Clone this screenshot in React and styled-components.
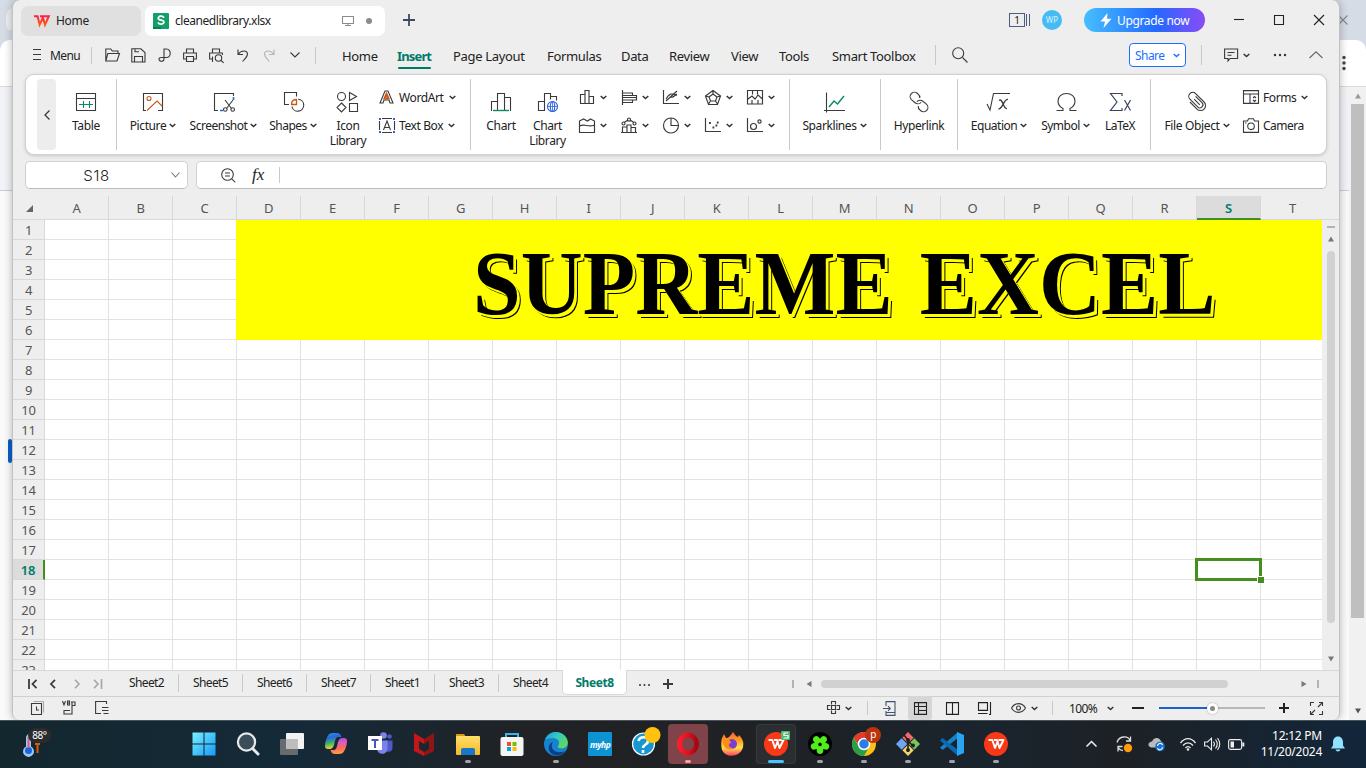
import React from "react";
import styled, { createGlobalStyle, css } from "styled-components";

const Global = createGlobalStyle`
  * { box-sizing: border-box; }
  body { margin: 0; overflow: hidden; }
  #root { width: 1366px; height: 768px; }
`;

const GREEN = "#007a68";

const Screen = styled.div`
  position: relative;
  width: 1366px;
  height: 768px;
  overflow: hidden;
  background: #fafafa;
  font-family: "Noto Sans", "Open Sans", sans-serif;
  font-size: 12px;
  letter-spacing: -0.4px;
  color: #222;
  white-space: nowrap;
  display: flex;
  flex-direction: column;
`;

/* ---------- icon helper ---------- */
const Svg = styled.svg`
  display: block;
  flex: none;
  overflow: visible;
  fill: none;
  stroke: ${(p) => p.$c || "#3a3a3a"};
  stroke-width: ${(p) => p.$sw || 1.1};
  margin-left: ${(p) => p.$ml || 0}px;
`;
const Icon = ({ w = 24, h = 24, c, sw, ml, children }) => (
  <Svg width={w} height={h} viewBox={`0 0 ${w} ${h}`} $c={c} $sw={sw} $ml={ml}>
    {children}
  </Svg>
);
const Caret = ({ ml, c = "#333" }) => (
  <Icon w={7} h={5} ml={ml} c={c} sw={1.5}><path d="M.7 1 L3.5 3.6 L6.3 1" /></Icon>
);

/* ---------- browser window behind ---------- */
const Backdrop = styled.div`
  position: absolute;
  inset: 0 0 48px 0;
  display: flex;
  flex-direction: column;
`;
const BackTabs = styled.div`
  height: 40px;
  background: #d6dce6;
  display: flex;
  justify-content: space-between;
`;
const BackTab = styled.div`
  margin: 7px 0 7px 6px;
  width: 60px;
  border-radius: 10px;
  background: #eceef2;
`;
const BackClose = styled.div`padding: 15px 18px 0 0;`;
const BackToolbar = styled.div`
  height: 47px;
  background: #fff;
  border-radius: 10px 10px 0 0;
  border-bottom: 1px solid #d9dbd6;
  box-shadow: 0 -10px 0 0 #d6dce6;
  display: flex;
  justify-content: flex-end;
  padding: 15px 20px 0 0;
`;
const BackBody = styled.div`
  flex: 1;
  display: flex;
  justify-content: space-between;
`;
const BackPage = styled.div`
  width: 1349px;
  display: flex;
  flex-direction: column;
  background: #fafafa;
`;
const BackHero = styled.div`
  height: 104px;
  background: #f1f3f6;
  border-bottom: 1px solid #c3cfdc;
`;
const BackMark = styled.div`
  width: 4px;
  height: 24px;
  margin: 248px 0 0 8px;
  border-radius: 2px;
  background: #0b5fcb;
`;
const BackScroll = styled.div`
  width: 17px;
  background: #f1f1f1;
  display: flex;
  flex-direction: column;
  align-items: center;
  padding-top: 6px;
`;
const BackThumb = styled.div`
  width: 13px;
  height: 514px;
  margin: 5px 0 90px;
  background: #bfbfbf;
`;

/* ---------- application window ---------- */
const Window = styled.div`
  position: absolute;
  left: 12px;
  top: 0;
  width: 1328px;
  height: 720px;
  border: 1px solid #c2c2c2;
  border-width: 0 1px 0 1px;
  border-radius: 8px 8px 7px 7px;
  background: #eeeeee;
  box-shadow: 0 0 9px rgba(0, 0, 0, 0.28);
  overflow: hidden;
  display: flex;
  flex-direction: column;
`;
const TitleBar = styled.div`
  height: 40px;
  flex: none;
  display: flex;
  align-items: center;
  padding-left: 8px;
`;
const Tab = styled.div`
  width: ${(p) => p.$w}px;
  height: 30px;
  margin: 1px 4px 0 0;
  padding-left: ${(p) => p.$pl}px;
  border-radius: 7px;
  background: ${(p) => (p.$active ? "#fff" : "#e0e0e0")};
  display: flex;
  align-items: center;
`;
const TabText = styled.span`
  width: ${(p) => p.$w}px;
  margin-left: ${(p) => p.$ml}px;
  letter-spacing: ${(p) => p.$ls ?? -0.4}px;
`;
const Dot = styled.i`
  width: 6px;
  height: 6px;
  margin-left: 12px;
  border-radius: 50%;
  background: #8c8c8c;
`;
const Count = styled.div`
  width: 16px;
  height: 14px;
  margin-left: 594px;
  border: 1px solid #4c5d80;
  font-size: 10px;
  line-height: 12px;
  text-align: center;
`;
const CountBars = styled.div`
  width: 4px;
  height: 12px;
  border: solid #4c5d80;
  border-width: 0 1px;
  margin-left: 1px;
`;
const Avatar = styled.div`
  width: 20px;
  height: 20px;
  margin-left: 12px;
  border-radius: 50%;
  background: #45bbf3;
  color: #d9f2ff;
  font-size: 8px;
  letter-spacing: 0;
  line-height: 19px;
  text-align: center;
`;
const Upgrade = styled.div`
  width: 121px;
  height: 24px;
  margin-left: 22px;
  padding-left: 16px;
  border-radius: 12px;
  background: linear-gradient(90deg, #45bfff, #2468ff 60%, #8a4bf8);
  color: #fff;
  display: flex;
  align-items: center;
  gap: 5px;
  letter-spacing: -0.35px;
`;

const MenuBar = styled.div`
  height: 35px;
  flex: none;
  display: flex;
  align-items: center;
  padding: 0 0 5px 19px;
`;
const VLine = styled.i`
  width: 1px;
  height: ${(p) => p.$h || 20}px;
  margin-left: ${(p) => p.$ml || 0}px;
  margin-right: ${(p) => p.$mr || 0}px;
  background: #c9c9c9;
  flex: none;
`;
const MenuTabs = styled.div`
  display: flex;
  margin-left: 26px;
  padding-top: 7px;
  height: 32px;
  font-size: 13px;
  letter-spacing: -0.33px;
`;
const MenuTab = styled.div`
  width: ${(p) => p.$w}px;
  height: 22px;
  line-height: 20px;
  ${(p) => p.$active && css`
    color: ${GREEN};
    font-weight: 700;
    letter-spacing: -0.85px;
    &::after {
      content: "";
      display: block;
      width: 33px;
      height: 2px;
      margin: 1px 0 0 1px;
      border-radius: 1px;
      background: ${GREEN};
    }
  `}
`;
const Share = styled.div`
  width: 57px;
  height: 24px;
  margin-left: 161px;
  border: 1px solid #1a6fff;
  border-radius: 4px;
  background: #fff;
  color: #1a6fff;
  display: flex;
  align-items: center;
  padding-left: 5px;
  letter-spacing: -0.55px;
`;

const Ribbon = styled.div`
  height: 79px;
  flex: none;
  margin: 0 13px;
  border-radius: 8px;
  background: #fff;
  box-shadow: 0 0 0 1px #d2d2d2, 0 1px 4px rgba(0, 0, 0, 0.25);
  display: flex;
  padding: 4px 0 4px 11px;
`;
const RibbonScroll = styled.div`
  width: 19px;
  border-radius: 4px;
  background: #ededed;
  display: flex;
  align-items: center;
  justify-content: center;
  margin-right: 1px;
`;
const RibbonCell = styled.div`
  width: ${(p) => p.$w}px;
  padding-top: 11px;
  flex: none;
  display: flex;
  flex-direction: column;
  align-items: center;
`;
const CellLabel = styled.div`
  display: flex;
  align-items: center;
  justify-content: center;
  gap: 3px;
  margin-top: 4px;
  line-height: 15px;
  text-align: center;
  white-space: pre;
  letter-spacing: ${(p) => p.$ls ?? -0.4}px;
`;
const RibbonStack = styled.div`
  width: ${(p) => p.$w}px;
  padding: 4px 0 0 ${(p) => p.$pl || 0}px;
  flex: none;
`;
const StackRow = styled.div`
  height: 28px;
  display: flex;
  align-items: center;
`;
const StackText = styled.span`
  width: ${(p) => p.$w}px;
  margin-left: 4px;
  letter-spacing: ${(p) => p.$ls ?? -0.4}px;
`;
const MiniCell = styled.div`
  width: 42px;
  display: flex;
  align-items: center;
  gap: 5px;
`;

const FormulaRow = styled.div`
  height: 42px;
  flex: none;
  display: flex;
  gap: 8px;
  padding: 7px 12px 8px;
`;
const Field = styled.div`
  ${(p) => (p.$w ? `width: ${p.$w}px;` : "flex: 1;")}
  height: 28px;
  border: 1px solid #d0d0d0;
  border-bottom-color: #bcbcbc;
  border-radius: 5px;
  background: #fff;
  display: flex;
  align-items: center;
`;
const NameText = styled.span`
  width: 145px;
  padding-right: 4px;
  text-align: center;
  font-family: Inter, "Open Sans", sans-serif;
  font-weight: 300;
  font-size: 15px;
  letter-spacing: 0.6px;
`;
const Fx = styled.span`
  margin-left: 16px;
  width: 28px;
  font: italic 17px "Liberation Serif", serif;
  letter-spacing: 0;
`;

/* ---------- sheet ---------- */
const SheetArea = styled.div`
  height: 474px;
  flex: none;
  display: flex;
  overflow: hidden;
  color: #555;
  font-size: 13px;
  letter-spacing: -0.3px;
`;
const RowHeads = styled.div`width: 32px; flex: none;`;
const Corner = styled.div`
  height: 24px;
  border-bottom: 1px solid #d8d8d8;
  padding: 9px 0 0 13px;
`;
const RowHead = styled.div`
  height: 20px;
  line-height: 21px;
  text-align: center;
  border-bottom: 1px solid #d8d8d8;
  border-right: 1px solid #d8d8d8;
  ${(p) => p.$on && css`
    color: ${GREEN};
    font-weight: 600;
    background: #dcdcdc;
    border-right: 2px solid #3f8f1f;
  `}
`;
const Sheet = styled.div`
  width: 1277px;
  flex: none;
  overflow: hidden;
  position: relative;
`;
const ColHeads = styled.div`display: flex;`;
const ColHead = styled.div`
  width: 64px;
  flex: none;
  height: 24px;
  line-height: 25px;
  text-align: center;
  border-bottom: 1px solid #d8d8d8;
  border-right: 1px solid ${(p) => (p.$last ? "transparent" : "#d8d8d8")};
  ${(p) => p.$on && css`
    color: ${GREEN};
    font-weight: 600;
    background: #dcdcdc;
    border-bottom: 2px solid #3f8f1f;
  `}
`;
const Cells = styled.div`
  height: 450px;
  background-color: #fff;
  background-image:
    linear-gradient(90deg, transparent 63px, #e2e2e2 63px),
    linear-gradient(transparent 19px, #e2e2e2 19px);
  background-size: 64px 20px;
  padding-left: 191px;
`;
const Banner = styled.div`
  height: 120px;
  padding-left: 237px;
  background: #ffff00;
  color: #000;
  font: bold 92px/126px "Liberation Serif", serif;
  letter-spacing: 0;
  word-spacing: 6px;
  text-shadow: 1px 1px 0 #ff0, 2px 2px 0 #ff0, 3px 3px 0 #ff0, 4px 4px 0 #000;
`;
const BannerText = styled.span`
  display: inline-block;
  transform: scaleX(0.933);
  transform-origin: 0 50%;
`;
/* selection frame drawn over the cell grid */
const Selection = styled.div`
  position: absolute;
  left: 1150px;
  top: 362px;
  width: 67px;
  height: 23px;
  border: 3px solid #43901f;
  &::after {
    content: "";
    position: absolute;
    right: -5px;
    bottom: -5px;
    width: 6px;
    height: 6px;
    background: #43901f;
    border: solid #fff;
    border-width: 1px 0 0 1px;
  }
`;
const VScroll = styled.div`
  flex: 1;
  display: flex;
  flex-direction: column;
  align-items: center;
  margin-top: 23px;
  border-top: 1px solid #d8d8d8;
  padding-top: 6px;
`;
const Tick = styled.i`
  width: ${(p) => p.$w}px;
  height: ${(p) => p.$h}px;
  margin-left: ${(p) => p.$ml || 0}px;
  background: #b3b3b3;
  flex: none;
`;
const VThumb = styled.div`
  width: 8px;
  height: 372px;
  margin: 9px 0 33px;
  border-radius: 4px;
  background: #d1d1d1;
`;

const SheetBar = styled.div`
  height: 26px;
  flex: none;
  border-top: 1px solid #d8d8d8;
  display: flex;
  align-items: center;
  padding-left: 14px;
`;
const SheetTabs = styled.div`display: flex; margin-left: 12px; height: 25px;`;
const SheetTab = styled.div`
  width: 64px;
  height: 18px;
  margin-top: 3px;
  line-height: 17px;
  text-align: center;
  letter-spacing: -0.6px;
  border-right: 1px solid ${(p) => (p.$plain ? "transparent" : "#c9c9c9")};
  ${(p) => p.$active && css`
    height: 25px;
    width: 65px;
    margin: -1px 0 0 -1px;
    line-height: 26px;
    background: #fff;
    border: 1px solid #d8d8d8;
    border-top: 0;
    border-radius: 0 0 5px 5px;
    color: ${GREEN};
    font-weight: 700;
    letter-spacing: -0.45px;
  `}
`;
const HThumb = styled.div`
  width: 407px;
  height: 8px;
  margin: 0 73px 0 9px;
  border-radius: 4px;
  background: #d1d1d1;
`;
const StatusBar = styled.div`
  height: 24px;
  flex: none;
  border-top: 1px solid #d0d0d0;
  display: flex;
  align-items: center;
  padding: 0 0 1px 18px;
`;
const ViewButton = styled.div`
  width: 24px;
  height: 24px;
  margin-left: 12px;
  border-radius: 3px;
  background: #d6d6d6;
  display: flex;
  align-items: center;
  justify-content: center;
`;
const Zoom = styled.span`margin-left: 16px; width: 28px; letter-spacing: -0.6px;`;
const Slider = styled.div`
  width: 106px;
  height: 2px;
  margin-left: 15px;
  background: linear-gradient(90deg, #1c61c9 50%, #b8b8b8 50%);
  display: flex;
  align-items: center;
  justify-content: center;
`;
const Knob = styled.div`
  width: 11px;
  height: 11px;
  border-radius: 50%;
  border: 3px solid #fff;
  background: #888;
  box-shadow: 0 0 2px rgba(0, 0, 0, 0.35);
  flex: none;
`;

/* ---------- taskbar ---------- */
const Taskbar = styled.div`
  height: 48px;
  margin-top: auto;
  position: relative;
  border-top: 1px solid #46525a;
  background: linear-gradient(90deg, #13272f, #152a38 22%, #202226 38%, #1f2124 55%, #1a242d 72%, #1d2126 82%, #12263a);
  color: #fff;
  display: flex;
  align-items: center;
  padding-bottom: 1px;
`;
const Weather = styled.div`width: 182px; padding-left: 22px; display: flex;`;
const Temp = styled.div`
  width: 23px;
  height: 15px;
  margin: -4px 0 0 -12px;
  border-radius: 8px;
  background: #2c2c2c;
  font-size: 10px;
  line-height: 15px;
  text-align: center;
  z-index: 1;
`;
const TaskCell = styled.div`
  width: 44px;
  height: 46px;
  display: flex;
  align-items: center;
  justify-content: center;
`;
const TaskTile = styled.div`
  width: 40px;
  height: 40px;
  border-radius: 4px;
  background: ${(p) => p.$bg || "transparent"};
  box-shadow: ${(p) => (p.$ring ? "inset 0 0 0 1px #383b3e" : "none")};
  display: flex;
  flex-direction: column;
  align-items: center;
  padding-top: 8px;
`;
const Run = styled.i`
  width: ${(p) => p.$w}px;
  height: 3px;
  margin-top: 4px;
  border-radius: 2px;
  background: ${(p) => p.$c};
`;
const Clock = styled.div`
  width: 70px;
  margin-left: 8px;
  text-align: right;
  line-height: 16px;
  letter-spacing: -0.25px;
`;

/* ---------- ribbon data ---------- */
const G = "#0a8a6a", O = "#c8591c", B = "#2f62e0";
const big = {
  table: <Icon><path d="M2.500 3.500h19v17h-19zM2.500 8.500h19" /><path stroke={G} d="M5 14.500h14M9.500 11v7M15.500 11v7" /></Icon>,
  picture: <Icon><path d="M5 20.500H2.500v-17h19v17H17" /><circle cx="8" cy="8.500" r="2" stroke={O} /><path stroke={O} d="M6 20.500l10-9.500 5.500 5.500" /></Icon>,
  shot: <Icon><path d="M6 20.500H2.500v-17h19V6" /><path stroke={B} strokeWidth="1.600" d="M8 20.500h3M21.500 7v3" /><path d="M13 10l6.500 8.500M21 10l-6.500 8.500" /><circle cx="13.300" cy="19.500" r="1.800" /><circle cx="20.700" cy="19.500" r="1.800" /></Icon>,
  shapes: <Icon><path d="M8 14.500H3.500v-12h12V6.500" /><path stroke={O} strokeWidth="1.300" d="M10.500 14.500c0-3 2-5 5-5v5z" /><path d="M17.200 9.200a6 6 0 1 1-6.300 7.300" /></Icon>,
  icons: <Icon><circle cx="5.500" cy="6.500" r="4" /><path d="M13.500 2.500v8l7-4zM5.500 13l4.500 4.500-4.500 4.500-4.500-4.500zM13.500 13.500h8v8h-8z" /></Icon>,
  chart: <Icon><path d="M2.500 21V11.500h6V21M8.500 11.500v-8h7V21M15.500 7.500h6V21" /><path stroke={G} strokeWidth="1.400" d="M4 20.500h16" /></Icon>,
  chartLib: <Icon><path d="M2.500 20.500v-9h6v9zM8.500 11.500v-8h6v6M14.500 6.500h6v4" /><g stroke={B}><circle cx="16.500" cy="16.500" r="5" /><ellipse cx="16.500" cy="16.500" rx="2.200" ry="5" /><path d="M11.500 16.500h10M16.500 11.500v10" strokeWidth=".8" /></g></Icon>,
  spark: <Icon><path d="M3.500 2.500v20M1 20.500h21" /><path stroke={G} strokeWidth="1.400" d="M6 17l5-6 3.500 3L21 6" /></Icon>,
  link: <Icon><g transform="rotate(40 12 12)"><path d="M10 8.500A4.200 4.200 0 0 0 6 6.500H5a4.300 4.300 0 0 0 0 8.600h4.500a4.300 4.300 0 0 0 4.300-4.300" /><path d="M14 15.500a4.200 4.200 0 0 0 4 2h1a4.300 4.300 0 0 0 0-8.600h-4.500a4.300 4.300 0 0 0-4.300 4.300" /></g></Icon>,
  equation: <Icon><path d="M0 14l3 6 3.500-16.500H23" /><path strokeWidth="1.300" d="M12 10.500c4-3 4 9 8 8M21 9.500c-4-1-5.500 10-9.500 9.500" /></Icon>,
  symbol: <Icon><path d="M2.500 20.500H9v-2c-3-1.500-5-4-5-7.500 0-4.500 3.500-7.500 8.500-7.500S21 6.500 21 11c0 3.500-2 6-5 7.500v2h6.500" /></Icon>,
  latex: <Icon><g stroke="#38445e" strokeWidth="1.200"><path d="M14 6V3.500H2.500L9 12l-6.500 8.500H14V18M16.500 10l6 10.500M22.500 10l-6 10.500" /></g></Icon>,
  clip: <Icon><g transform="rotate(-45 12 12)"><path d="M15 7v9a3 3 0 0 1-6 0V5a4 4 0 0 1 8 0v12a5 5 0 0 1-10 0V7M12 8v8" /></g></Icon>,
};
const mini = [
  [<path d="M1.500 13.500v-9H6v9M6 13.500v-13h4v13M10 6.500h4.500v7M1 13.500h14" />, <path d="M1.500 0v15M1.500 3h10v2.500H2M1.500 5.500h14v4.500h-14M11.500 10v2.500h-10M2 7.500h13" />, <path d="M.5 0v13.500H16M3 11L14 1M3 9C8 0 11 6 14 5M8 7c2 1 4-2 6-3" />, <path d="M8 .5L15.500 6l-3 8.500h-9L.5 6zM8 4l4 3-1.500 4h-5L4 7zM8 0v4M.5 6L4 7M15.500 6L12 7M3.500 14l2-3M12.500 14l-2-3" />, <path d="M.5 .5h15v13.500H.5zM5.500 .5v4M10.500 .5v4M1 9l4-3 3 3 3-4 4.500 4M5 14v-4M11 14v-4" />],
  [<path d="M.5 3l4-2 4 2 3-2 4 2v11.500H.5zM.5 8c6-3 8 2 15-1" />, <path d="M1.500 14V9h4.500v5M6 14V7h4v7M10 9.500h4.500V14M0 14.500h16M3 4.500l4-2.500M9 2l4 2.500M1 5.500a1.500 1.500 0 1 0 3 0 1.500 1.500 0 1 0-3 0M6.500 1.500a1.500 1.500 0 1 0 3 0 1.500 1.500 0 1 0-3 0M12 5.500a1.500 1.500 0 1 0 3 0 1.500 1.500 0 1 0-3 0" />, <g><circle cx="8" cy="7.500" r="7.500" /><path d="M8 0v7.500h7.500" /></g>, <g><path d="M.5 0v13.500H16" /><path strokeWidth="1.800" d="M4 5h1.800M7.500 9.500h1.800M10.500 7.500h1.800M11.800 4.500h1.800" /></g>, <g><path d="M.5 0v13.500H16" /><circle cx="6.500" cy="8.500" r="3" /><circle cx="12.500" cy="3.500" r="1.600" /></g>],
];

const Item = ({ w, icon, label, caret, ls }) => (
  <RibbonCell $w={w}>
    {big[icon]}
    <CellLabel $ls={ls}>{label}{caret && <Caret />}</CellLabel>
  </RibbonCell>
);

/* ---------- taskbar icons ---------- */
const WpsW = () => (
  <path fill="none" stroke="#fff" strokeWidth="1.900" strokeLinejoin="round" d="M4.500 8h3.800l2.700 8 3-7.500M10 8h3l2.500 8L19.500 8h-5" />
);
const task = [
  { i: <g fill="url(#win)"><path d="M.5 .5h11v11H.5zM12.500 .5h11v11h-11zM.5 12.500h11v11H.5zM12.500 12.500h11v11h-11z" /></g> },
  { i: <g fill="#3b4d58" stroke="#e6eaee"><circle cx="10.500" cy="10" r="8.600" strokeWidth="2.200" /><path strokeWidth="3" strokeLinecap="round" d="M17 17l5 5" /></g> },
  { i: <g><rect x="6" y="1" width="18" height="16" rx="1" fill="#f2f2f2" /><rect x="0" y="7" width="18" height="16" rx="1" fill="#777" fillOpacity=".85" /><rect x="6" y="7" width="12" height="10" fill="#bdbdbd" /></g> },
  { i: <g><path fill="url(#cpA)" d="M1 14C1 9 3 5 4.500 3S8 1 13 1q3.500 0 4.500 4h-3c-2.500 0-3 2-4 6s-2 6-5.500 6-4-1-4-3z" /><path fill="url(#cpB)" d="M23 9c0 5-2 9-3.500 11S16 22 11 22q-3.500 0-4.500-4h3c2.500 0 3-2 4-6s2-6 5.500-6 4 1 4 3z" /></g> },
  { i: <g><circle cx="15.500" cy="3.500" r="3.300" fill="#7b83eb" /><circle cx="21.500" cy="4.500" r="2.300" fill="#5059c9" /><path fill="#5059c9" d="M17 8.500h7.500v7c0 4-3 5-6 4z" /><path fill="#7b83eb" d="M9 8.500h10.500v8c0 7-10.500 7-10.500 0z" /><rect x="0" y="4" width="14" height="14" fill="#fff" /><path fill="none" stroke="#4b53bc" strokeWidth="2" d="M3.500 8h7M7 8v8" /></g> },
  { i: <g><path fill="#c6161c" d="M2 1l10 6v5L7 9v8l5 3v4L2 19z" /><path fill="#8e1616" d="M22 1L12 7v5l5-3v8l-5 3v4l10-5z" /></g> },
  { run: 1, i: <g><path fill="#d99a12" d="M0 2h8l2 3H0z" /><rect y="4" width="24" height="19" rx="1" fill="url(#fold)" /><path fill="#1777c9" d="M5 23v-5q0-2 2-2h10q2 0 2 2v5z" /></g> },
  { i: <g><path fill="none" stroke="#38b7ee" strokeWidth="2" d="M6 6V2h12v4" /><rect x=".5" y="5" width="23" height="19" rx="2" fill="#f5f5f5" /><path fill="#f25022" d="M7 10h4v4H7z" /><path fill="#7fba00" d="M12.500 10h4v4h-4z" /><path fill="#00a4ef" d="M7 15h4v4H7z" /><path fill="#ffb900" d="M12.500 15h4v4h-4z" /></g> },
  { run: 1, i: <g><circle cx="12" cy="12" r="12" fill="#1583d0" /><path fill="url(#edgeG)" d="M1 8C4-1 14-2 20 3c5 5 5 11 0 13-3 1-7 0-6-2 3-4 0-8-5-8-4 0-7 1-8 2z" /><path fill="#0c3f86" d="M9 10c-4 6 2 13 12 9-5 7-14 5-16-1-1-4 1-7 4-8z" /></g> },
  { i: <g><rect width="24" height="24" rx="1" fill="#0d93d2" /><text x="2" y="15.500" fill="#fff" fontSize="8.500" fontStyle="italic" fontWeight="bold" letterSpacing="-.5">myhp</text></g> },
  { i: <g><circle cx="11.500" cy="12" r="11" fill="#1597d4" stroke="#fff" strokeWidth="1.200" /><path fill="none" stroke="#fff" strokeWidth="2.600" d="M6.500 9c1-5 9.500-5 9.500 0 0 4-5 3-5 7M11 18v3" /><circle cx="20.500" cy="3" r="8" fill="#ffc20e" /></g> },
  { tile: "#7f4449", run: 1, runC: "#ff9a9e", i: <g><ellipse cx="12" cy="12" rx="8.500" ry="9" fill="none" stroke="url(#opera)" strokeWidth="5" /></g> },
  { i: <g><path fill="url(#fx)" d="M2 6l2-4 2 4c3 0 4-2 7-6 2 2 2 4 5 5l1-2c4 4 5 8 4 12-2 10-17 12-21 3C1 14 1 9 2 6z" /><circle cx="12" cy="12" r="5" fill="#7a3fd0" /><path fill="#ff8a1c" d="M3 8c5-2 8 1 8 3-3 0-3 5 2 5-5 4-11-1-10-8z" /></g> },
  { tile: "#2b2e31", ring: 1, run: 16, runC: "#4cc2ff", i: <g><circle cx="12" cy="12" r="12" fill="#f93817" /><WpsW /><rect x="17" y="-1" width="9" height="9" rx="1" fill="#4db872" /><path fill="none" stroke="#fff" strokeWidth="1.200" d="M24 1h-4v2.500h4V6h-4.500" /></g> },
  { run: 1, i: <g><circle cx="12" cy="12" r="12" fill="#000" />{[0, 72, 144, 216, 288].map((a) => <ellipse key={a} cx="12" cy="7" rx="3.300" ry="4" fill="#4ff01a" transform={`rotate(${a + 36} 12 12.500)`} />)}</g> },
  { run: 1, i: <g><circle cx="12" cy="12" r="12" fill="#fbc116" /><path fill="#e33b2e" d="M1.600 6A12 12 0 0 1 22.400 6H12L8 15z" /><path fill="#27a04a" d="M1.600 6A12 12 0 0 0 12 24l5-9-9 1z" /><circle cx="12" cy="12" r="5.500" fill="#2a7de9" stroke="#fff" strokeWidth="1.500" /><circle cx="21" cy="3" r="8" fill="#b9330f" /><text x="18.200" y="6" fill="#fff" fontSize="10" letterSpacing="0">p</text></g> },
  { run: 1, i: <g><g transform="rotate(45 12 12)"><path fill="#f0696c" d="M3.500 3.500h8v8h-8z" /><path fill="#7cc35b" d="M12.500 3.500h8v8h-8z" /><path fill="#6ea8f5" d="M3.500 12.500h8v8h-8z" /><path fill="#f3d36b" d="M12.500 12.500h8v8h-8z" /></g><path fill="none" stroke="#222" strokeWidth="1.600" d="M8 3l4 5v12M12 9l5 5" /><circle cx="12" cy="8" r="2" fill="#222" /><circle cx="12" cy="18" r="2" fill="#222" /><circle cx="17" cy="13.500" r="2" fill="#222" /></g> },
  { run: 1, i: <g><path fill="#1780c8" d="M18 0L0 15.500l2.500 2.500L18 6z" /><path fill="#0a68b0" d="M18 24L0 8.500 2.500 6 18 18z" /><path fill="#2aa4f0" d="M17 0l7 3v18l-7 3z" /></g> },
  { run: 1, i: <g><circle cx="12" cy="12" r="12" fill="#f93817" /><WpsW /></g> },
];

const grad = (id, stops, x2 = 1, y2 = 1) => (
  <linearGradient id={id} x1="0" y1="0" x2={x2} y2={y2}>
    {stops.map((s, i) => <stop key={i} offset={i / (stops.length - 1)} stopColor={s} />)}
  </linearGradient>
);
const Defs = () => (
  <Svg width="0" height="0">
    <defs>
      {grad("win", ["#7df0fd", "#45c6fb", "#1899f5"])}
      {grad("cpA", ["#1aa0e8", "#2d62e0", "#38b46b", "#f5cf2a"], 0.2, 1)}
      {grad("cpB", ["#8c52e8", "#e35ac0", "#f86b5f", "#ff9a3d"], 0.1, 1)}
      {grad("fold", ["#ffdf6b", "#f7b824"], 0, 1)}
      {grad("edgeG", ["#1b9be0", "#35c8c3", "#5fd95a"], 1, 0.6)}
      {grad("opera", ["#ff1b2d", "#e0121f", "#a00a14"], 1, 0)}
      {grad("fx", ["#ff5a3c", "#ff9a1c", "#ffe14a", "#ff3d63"], 0, 1)}
      {grad("wps", ["#ff1f4b", "#ff5a0f"], 0, 1)}
    </defs>
  </Svg>
);

const Tri = ({ d = "up", ml, c = "#777", s = 6 }) => (
  <Icon w={s} h={s} ml={ml} c="none">
    <path fill={c} d={{ up: "M0 5.500L3 .5 6 5.500z", down: "M0 .5L3 5.500 6 .5z", left: "M5.500 0L.5 3l5 3z", right: "M.5 0L5.500 3l-5 3z" }[d]} />
  </Icon>
);

export default function App() {
  const cols = "ABCDEFGHIJKLMNOPQRST".split("");
  const rows = Array.from({ length: 23 }, (_, i) => i + 1);
  return (
    <Screen>
      <Global />
      <Defs />
      <Backdrop>
        <BackTabs>
          <BackTab />
          <BackClose><Icon w={10} h={10} c="#888"><path d="M.5 .5l9 9M9.500 .5l-9 9" /></Icon></BackClose>
        </BackTabs>
        <BackToolbar><Icon w={4} h={16} c="none"><g fill="#444"><circle cx="2" cy="2.500" r="1.700" /><circle cx="2" cy="8" r="1.700" /><circle cx="2" cy="13.500" r="1.700" /></g></Icon></BackToolbar>
        <BackBody>
          <BackPage><BackHero /><BackMark /></BackPage>
          <BackScroll><Tri c="#9a9a9a" /><BackThumb /><Tri d="down" c="#555" /></BackScroll>
        </BackBody>
      </Backdrop>

      <Window>
        <TitleBar>
          <Tab $w={120} $pl={13}>
            <Icon w={16} h={12} c="url(#wps)" sw={2}><path d="M0 1.200h3.600l2 8.600 3.600-7.800M6 1.200h2.500l2.500 8.600L14.800 1.200H9.500" /></Icon>
            <TabText $w={40} $ml={6} $ls={-0.3}>Home</TabText>
          </Tab>
          <Tab $w={240} $pl={8} $active>
            <Icon w={16} h={16} c="none"><rect width="16" height="16" rx="1" fill="#12a06a" /><path fill="#0b7d50" d="M0 14h8v2H0z" /><path stroke="#fff" strokeWidth="1.800" d="M11 4.800C9.500 2.300 5 2.800 5.300 5.400c.3 2.500 5.400 1.200 5.600 3.500.2 2.600-4.500 2.900-6 .5" /></Icon>
            <TabText $w={161} $ml={6} $ls={-0.45}>cleanedlibrary.xlsx</TabText>
            <Icon w={12} h={12} ml={6} c="#8c8c8c"><path d="M.5 1.500h11v7H.5zM6 8.500v2M3 10.500h6" /></Icon>
            <Dot />
          </Tab>
          <Icon w={12} h={12} ml={14} c="#3d4a63" sw={1.8}><path d="M6 0v12M0 6h12" /></Icon>
          <Count>1</Count><CountBars />
          <Avatar>WP</Avatar>
          <Upgrade>
            <Icon w={12} h={15} c="none"><path fill="#fff" d="M7.500 0L.5 8.500h4.500L3.500 15 11.500 5.800H7z" /></Icon>
            Upgrade now
          </Upgrade>
          <Icon w={10} h={10} ml={29} c="#222"><path d="M0 4.500h10" /></Icon>
          <Icon w={10} h={10} ml={30} c="#222"><path d="M.5 .5h9v9h-9z" /></Icon>
          <Icon w={10} h={10} ml={30} c="#222"><path d="M0 0l10 10M10 0L0 10" /></Icon>
        </TitleBar>

        <MenuBar>
          <Icon w={10} h={12} ml={0}><path d="M1 .5h8M1 5.500h8M1 10.500h8" /></Icon>
          <TabText $w={41} $ml={8} $ls={-0.6}>Menu</TabText>
          <VLine $h={17} />
          <Icon w={15} h={14} ml={13}><path d="M.8 13V1h5l1.500 2H13v2.500M.8 13l2-7.500H14.500L12 13z" /></Icon>
          <Icon w={15} h={15} ml={11}><path d="M3.500 14H.8V.8h9L14 4.500V14h-2.500M3.500 14V8.500h8V14zM4 .8v3h4" /></Icon>
          <Icon w={13} h={15} ml={12}><path d="M6 9.500h2.500c5 0 5-8.500 0-8.500H6v10c0 3-5 3-5 .3 0-1.300 1-1.800 2.500-1.800h2" /></Icon>
          <Icon w={14} h={15} ml={12}><path d="M3.500 5V1h7v4M3.500 11H.6V5h12.800v6h-2.900M3.500 8.500h7v5h-7z" /></Icon>
          <Icon w={16} h={15} ml={12}><path d="M3.500 5V1h7v4M4 11H.6V5h12.800v2M3.500 14V8.500" /><circle cx="9.500" cy="10" r="3.200" /><path d="M12 12.500l2.800 2.300" /></Icon>
          <Icon w={12} h={13} ml={12}><path d="M1 0.500v5h5M1.200 5.300C4 1 10.500 1 10.500 5c0 3-3 5-5 7.500" /></Icon>
          <Icon w={12} h={13} ml={14} c="#b5b5b5"><path d="M11 .5v5H6M10.800 5.300C8 1 1.500 1 1.500 5c0 3 3 5 5 7.500" /></Icon>
          <Icon w={10} h={6} ml={15}><path d="M.5 .5L5 5 9.500 .5" /></Icon>
          <VLine $h={17} $ml={15} />
          <MenuTabs>
            {[["Home", 55], ["Insert", 56], ["Page Layout", 94], ["Formulas", 74], ["Data", 48], ["Review", 62], ["View", 48], ["Tools", 53], ["Smart Toolbox", 103]].map(([t, w]) => (
              <MenuTab key={t} $w={w} $active={t === "Insert"}>{t}</MenuTab>
            ))}
          </MenuTabs>
          <VLine />
          <Icon w={16} h={16} ml={16}><circle cx="6.200" cy="6.200" r="5.500" /><path d="M10.500 10.500l5 5" /></Icon>
          <Share>Share<Caret ml={9} c="#1a6fff" /></Share>
          <VLine $ml={15} />
          <Icon w={15} h={14} ml={22}><path d="M.6 1h13v9.500H6l-2 2.500v-2.500H.6zM3.500 4.500h7M3.500 7.200h4" /></Icon>
          <Caret ml={4} />
          <Icon w={14} h={4} ml={23} c="none"><g fill="#333"><circle cx="2" cy="2" r="1.200" /><circle cx="7" cy="2" r="1.200" /><circle cx="12" cy="2" r="1.200" /></g></Icon>
          <Icon w={14} h={8} ml={22} c="#667"><path d="M.5 7L7 .8 13.500 7" /></Icon>
        </MenuBar>

        <Ribbon>
          <RibbonScroll><Icon w={6} h={10} sw={1.300}><path d="M5.500 .5L1 5l4.500 4.500" /></Icon></RibbonScroll>
          <Item w={58} icon="table" label="Table" ls={-0.3} />
          <VLine $h={71} $ml={1} />
          <Item w={72} icon="picture" label="Picture" caret />
          <Item w={69} icon="shot" label="Screenshot" caret ls={-0.5} />
          <Item w={70} icon="shapes" label="Shapes" caret ls={-0.5} />
          <Item w={40} icon="icons" label={"Icon\nLibrary"} />
          <RibbonStack $w={102} $pl={11}>
            <StackRow>
              <Icon w={16} h={14}><path d="M1 13L6 1h3l5 12h-3l-1-3H5l-1 3z" /><path stroke={O} strokeWidth="2" d="M5.500 8.500L7.500 4l2 4.500z" /></Icon>
              <StackText $w={50}>WordArt</StackText><Caret />
            </StackRow>
            <StackRow>
              <Icon w={16} h={15}><path d="M3 .5h10M3 14.500h10M.5 3v9M15.500 3v9M4.500 12L8 3l3.500 9M5.500 9.500h5" /><path stroke={B} strokeWidth="2" d="M0 1h2M14 1h2M0 14h2M14 14h2" /></Icon>
              <StackText $w={49}>Text Box</StackText><Caret />
            </StackRow>
          </RibbonStack>
          <VLine $h={71} $mr={2} />
          <Item w={56} icon="chart" label="Chart" ls={-0.3} />
          <Item w={37} icon="chartLib" label={"Chart\nLibrary"} />
          <RibbonStack $w={223} $pl={13}>
            {mini.map((r, i) => (
              <StackRow key={i}>
                {r.map((g, j) => <MiniCell key={j}><Icon w={16} h={15} sw={1.15}>{g}</Icon><Caret /></MiniCell>)}
              </StackRow>
            ))}
          </RibbonStack>
          <VLine $h={71} />
          <Item w={89} icon="spark" label="Sparklines" caret ls={-0.4} />
          <VLine $h={71} $ml={1} />
          <Item w={76} icon="link" label="Hyperlink" ls={-0.4} />
          <VLine $h={71} $mr={3} />
          <Item w={76} icon="equation" label="Equation" caret ls={-0.5} />
          <Item w={57} icon="symbol" label="Symbol" caret ls={-0.5} />
          <Item w={52} icon="latex" label="LaTeX" ls={-0.55} />
          <VLine $h={71} $ml={4} />
          <Item w={92} icon="clip" label="File Object" caret ls={-0.35} />
          <RibbonStack $w={80}>
            <StackRow>
              <Icon w={16} h={14}><path d="M.5 .6h15v12.800H.5zM.5 4h15M7 4v9.500M10 8l1.500-1.500L13 8M10 10l1.500 1.500L13 10" /></Icon>
              <StackText $w={38}>Forms</StackText><Caret />
            </StackRow>
            <StackRow>
              <Icon w={16} h={15}><path d="M.5 3h4L5.500 .8h5L11.500 3h4v11.400H.5z" /><circle cx="8" cy="8.300" r="3.300" /><path d="M2 5h1.500" /></Icon>
              <StackText $w={44} $ls={-0.5}>Camera</StackText>
            </StackRow>
          </RibbonStack>
        </Ribbon>

        <FormulaRow>
          <Field $w={163}><NameText>S18</NameText><Icon w={9} h={6} c="#777"><path d="M.5 .5l4 4.500 4-4.500" /></Icon></Field>
          <Field>
            <Icon w={15} h={15} ml={24}><circle cx="6.500" cy="6.500" r="5.800" /><path d="M4 5h5M4 8h5M10.800 10.800l3.500 3.500" /></Icon>
            <Fx>fx</Fx><VLine $h={16} $ml={-1} />
          </Field>
        </FormulaRow>

        <SheetArea>
          <RowHeads>
            <Corner><Icon w={7} h={7} c="none"><path fill="#666" d="M7 0v7H0z" /></Icon></Corner>
            {rows.map((r) => <RowHead key={r} $on={r === 18}>{r}</RowHead>)}
          </RowHeads>
          <Sheet>
            <ColHeads>{cols.map((c) => <ColHead key={c} $on={c === "S"} $last={c === "T"}>{c}</ColHead>)}</ColHeads>
            <Cells><Banner><BannerText>SUPREME EXCEL</BannerText></Banner></Cells>
            <Selection />
          </Sheet>
          <VScroll><Tick $w={8} $h={2} /><Icon w={1} h={8} /><Tri /><VThumb /><Tri d="down" /></VScroll>
        </SheetArea>

        <SheetBar>
          <Icon w={10} h={10} sw={1.8} ml={1}><path d="M1 0v10M8.500 .8L4.500 5l4 4.200" /></Icon>
          <Icon w={6} h={10} sw={1.8} ml={12}><path d="M5 .8L1 5l4 4.200" /></Icon>
          <Icon w={6} h={10} sw={1.6} ml={18} c="#a5a5a5"><path d="M1 .8L5 5l-4 4.200" /></Icon>
          <Icon w={10} h={10} sw={1.6} ml={13} c="#a5a5a5"><path d="M1 .8L5 5 1 9.200M8.500 0v10" /></Icon>
          <SheetTabs>
            {["Sheet2", "Sheet5", "Sheet6", "Sheet7", "Sheet1", "Sheet3", "Sheet4", "Sheet8"].map((s) => (
              <SheetTab key={s} $active={s === "Sheet8"} $plain={s === "Sheet4"}>{s}</SheetTab>
            ))}
          </SheetTabs>
          <Icon w={13} h={4} ml={11} c="none"><g fill="#333"><circle cx="2" cy="3" r="1" /><circle cx="6.500" cy="3" r="1" /><circle cx="11" cy="3" r="1" /></g></Icon>
          <Icon w={10} h={10} ml={12} sw={2}><path d="M5 0v10M0 5h10" /></Icon>
          <Tick $w={2} $h={8} $ml={119} />
          <Tri d="left" ml={12} />
          <HThumb />
          <Tri d="right" />
          <Tick $w={2} $h={8} $ml={10} />
        </SheetBar>

        <StatusBar>
          <Icon w={13} h={14}><path d="M.5 2.500h10v11H.5zM5.500 5.500v3.500H8" /><path stroke="#aaa" d="M2.500 .5h10v11" /></Icon>
          <Icon w={14} h={14} ml={18}><path d="M.5 0l1.500 4L3.500 0M5.500 0v4h2v-2h-2h2V0zM9 1h4v3.500h-3V13H2V9.500h6M2 13h7M10 1v4" /></Icon>
          <Icon w={14} h={14} ml={19}><path d="M11.500 3V.5H.6V12.500H6M7 6.500h6.500M7 9.500h6.500M8.500 12.500h5" /></Icon>
          <Icon w={14} h={14} ml={718}><path d="M4.500 3.500v-3h4v3M4.500 9.500v3h4v-3M3.500 4.500h-3v4h3M9.500 4.500h3v4h-3M4.500 4.500h4v4h-4z" /></Icon>
          <Caret ml={4} />
          <VLine $h={14} $ml={15} />
          <Icon w={13} h={15} ml={15} c="#46536e"><path d="M3 5V.6h9v13.800H3V10M0 7.500h7M5 5.200l2.300 2.300L5 9.800M3 11.500h9" /></Icon>
          <ViewButton><Icon w={13} h={13} c="#222"><path d="M.5 .6h12v11.800H.5zM.5 4.500h12M4.500 .6v11.800M4.500 8.500h8" /></Icon></ViewButton>
          <Icon w={13} h={13} ml={14} c="#222"><path d="M.5 .6h12v11.800H.5zM6.500 .6v11.800" /></Icon>
          <Icon w={13} h={13} ml={19} c="#222"><path d="M.5 .6h9v7.800h-9zM12.500 0v12.500H11M0 11.500h9.500" /></Icon>
          <Icon w={15} h={10} ml={20}><path d="M.5 5C4-.8 11-.8 14.500 5 11 10.800 4 10.800 .5 5z" /><circle cx="7.500" cy="5" r="2" /></Icon>
          <Caret ml={5} />
          <VLine $h={14} $ml={14} />
          <Zoom>100%</Zoom><Caret ml={10} />
          <Icon w={12} h={12} ml={18} sw={2} c="#222"><path d="M0 6h12" /></Icon>
          <Slider><Knob /></Slider>
          <Icon w={10} h={10} ml={14} sw={2} c="#222"><path d="M0 5h10M5 0v10" /></Icon>
          <Icon w={13} h={13} ml={21}><path d="M.5 4V.5H4M9 .5h3.500V4M12.500 9v3.500H9M4 12.500H.5V9M8 5L12 1M5 8l-4 4" /></Icon>
        </StatusBar>
      </Window>

      <Taskbar>
        <Weather>
          <Icon w={18} h={24} c="none"><path fill="#9cc8f2" d="M4 5q2.500-6 5 0v9.500a5.500 5.500 0 1 1-5 0z" /><circle cx="6.500" cy="18.500" r="3.500" fill="#1c63e0" /><path fill="#e05a7a" d="M5.500 5h2v11h-2z" /><path fill="#e2570f" d="M13 11h5v2h-1.500v8h-2v-8H13z" /></Icon>
          <Temp>88°</Temp>
        </Weather>
        {task.map((t, i) => (
          <TaskCell key={i}>
            <TaskTile $bg={t.tile} $ring={t.ring}>
              <Icon c="none">{t.i}</Icon>
              {t.run && <Run $w={t.run === 1 ? 6 : t.run} $c={t.runC || "#a0a4a8"} />}
            </TaskTile>
          </TaskCell>
        ))}
        <Icon w={11} h={6} ml={68} c="#eee" sw={1.500}><path d="M.5 5.500l5-5 5 5" /></Icon>
        <Icon w={16} h={16} ml={19} c="#ddd" sw={1.300}><path d="M1 6.500C3-.5 12-.5 14 4.500M14.500 .5v4.500H10M2 15.500v-5h4.500M2 11c1 2 3 3.500 5 3.500" /><circle cx="12" cy="12" r="4.200" fill="#ff9a0a" stroke="none" /></Icon>
        <Icon w={17} h={14} ml={16} c="none"><path fill="#bbb" d="M3 10.500C-1 9 0 5 4 4.500c2-5 8-4.500 9 0 3 0 4 6 0 6z" /><circle cx="12" cy="9.500" r="4.800" fill="#1a73d0" /><path stroke="#fff" strokeWidth="1.100" d="M9.500 9a2.600 2.600 0 0 1 5-1M14.500 10.200a2.600 2.600 0 0 1-5 1" /></Icon>
        <Icon w={16} h={13} ml={15} c="#eee" sw={1.300}><path d="M.5 5C5-.8 11-.8 15.500 5M3 7.500c3-3.500 7-3.500 10 0M5.500 10c1.500-1.800 3.500-1.800 5 0" /><circle cx="8" cy="11.500" r="1.200" fill="#eee" stroke="none" /></Icon>
        <Icon w={16} h={14} ml={8} c="#eee"><path d="M.6 5h2.900L7.500 1.200v11.600L3.500 9H.6zM9.500 4.500q1.800 2.500 0 5M11.500 2.500q3.500 4.500 0 9M13.500 1q4.500 6 0 12" /></Icon>
        <Icon w={16} h={11} ml={8} c="#eee"><rect x=".6" y=".6" width="13" height="9.800" rx="1.800" /><rect x="2.500" y="2.500" width="3.500" height="6" fill="#eee" stroke="none" /><path strokeWidth="2" d="M15.300 3.500v4" /></Icon>
        <Clock>12:12 PM<br />11/20/2024</Clock>
        <Icon w={14} h={16} ml={9} c="none"><path fill="#8fe3ff" d="M0 12.500l2-3V6c0-7.500 10-7.500 10 0v3.500l2 3zM4.500 13.500h5c-.5 2.500-4.500 2.500-5 0z" /></Icon>
      </Taskbar>
    </Screen>
  );
}
